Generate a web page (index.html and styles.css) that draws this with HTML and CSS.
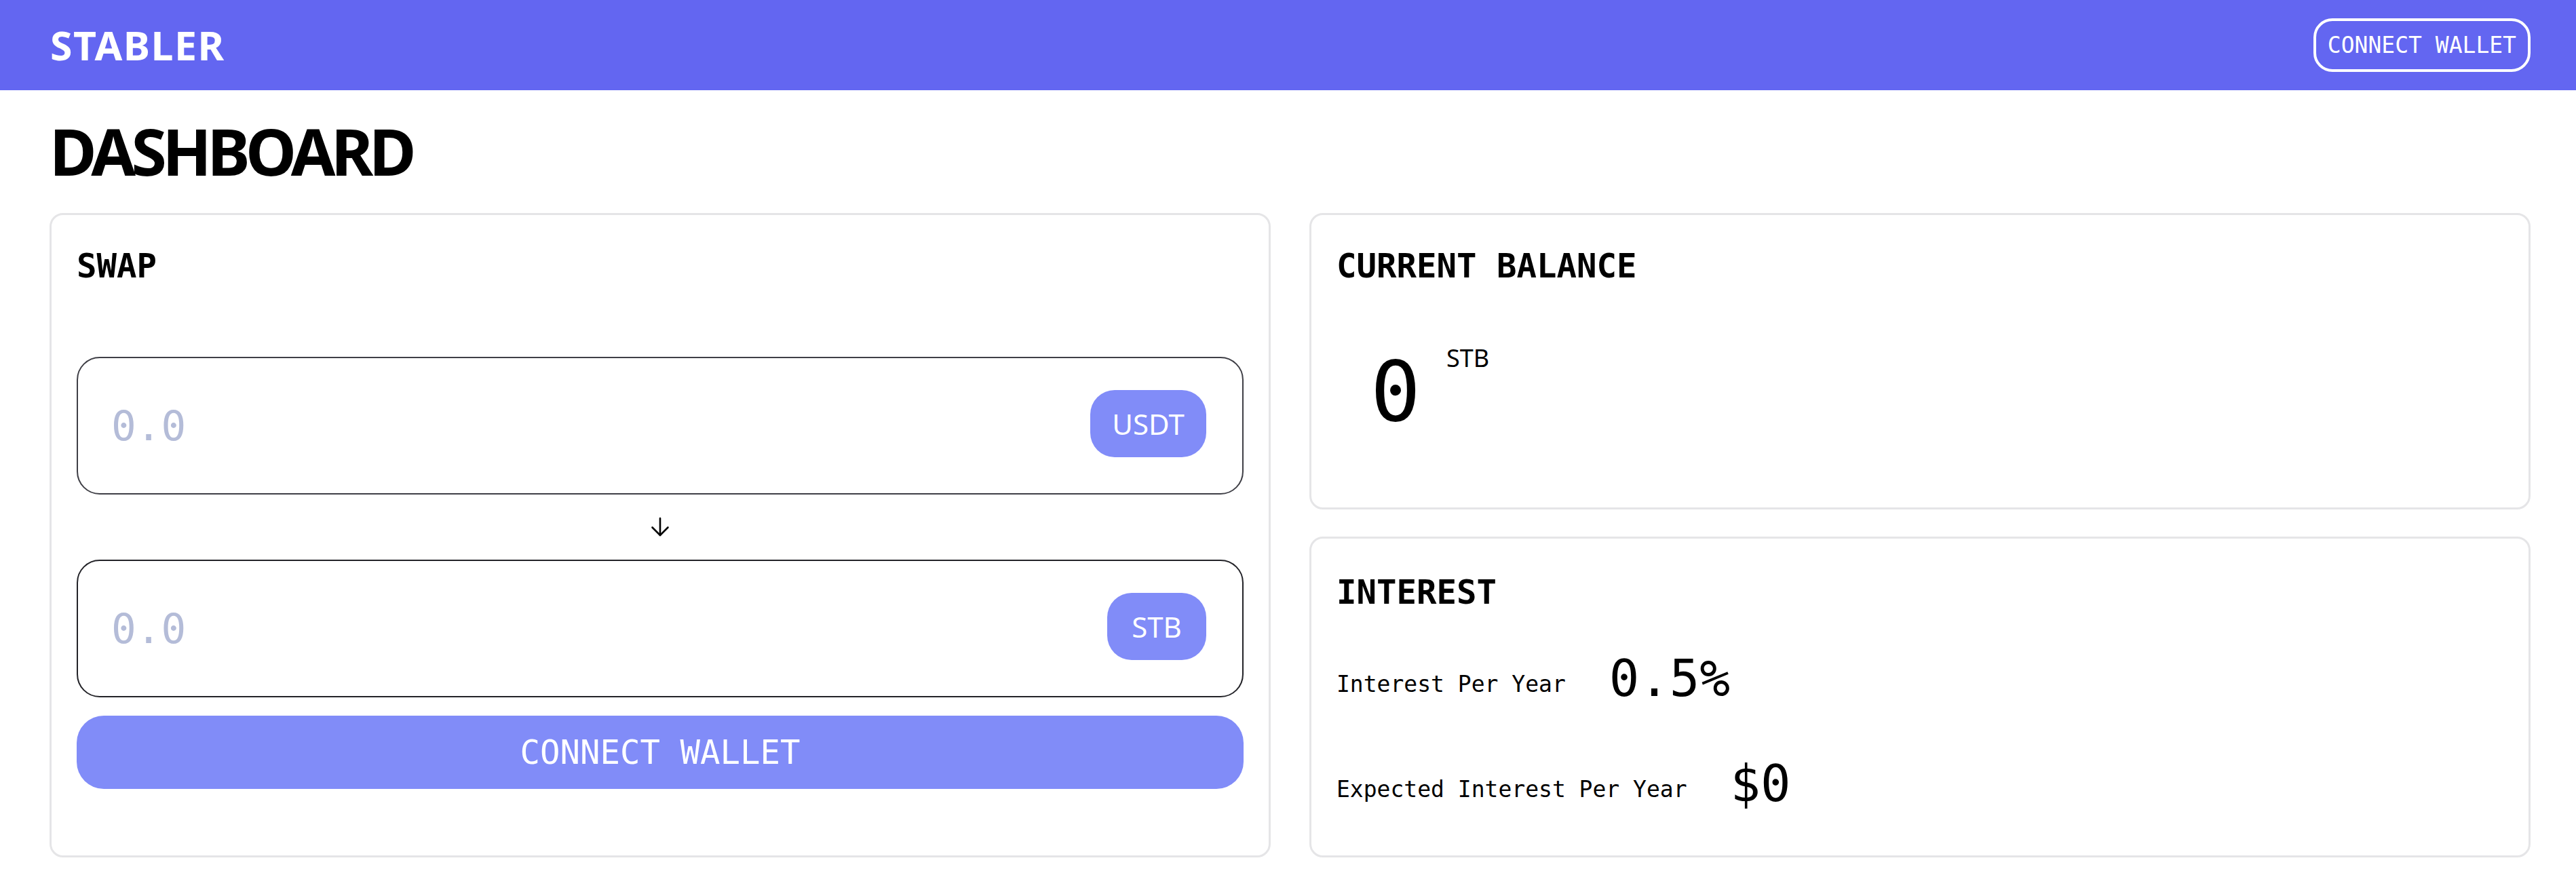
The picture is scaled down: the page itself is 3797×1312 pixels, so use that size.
FILE: index.html
```html
<!DOCTYPE html>
<html lang="en">
<head>
<meta charset="utf-8">
<title>Stabler – Dashboard</title>
<link rel="stylesheet" href="styles.css">
</head>
<body>
<header class="topbar">
  <div class="logo">STABLER</div>
  <button class="btn-outline" type="button">CONNECT WALLET</button>
</header>
<main class="page">
  <h1 class="page-title">DASHBOARD</h1>
  <div class="grid">
    <section class="card swap-card">
      <h2 class="card-title">SWAP</h2>
      <div class="field field-from">
        <input class="amount" type="text" placeholder="0.0">
        <span class="token token-usdt">USDT</span>
      </div>
      <div class="arrow-row">
        <svg class="arrow" width="28" height="30" viewBox="0 0 28 30" fill="none" stroke="#000" stroke-width="2.6" stroke-linecap="round" stroke-linejoin="round">
          <path d="M14 2 V27"/>
          <path d="M2.5 15.5 L14 27 L25.5 15.5"/>
        </svg>
      </div>
      <div class="field field-to">
        <input class="amount" type="text" placeholder="0.0">
        <span class="token token-stb">STB</span>
      </div>
      <button class="btn-primary" type="button">CONNECT WALLET</button>
    </section>
    <div class="side">
      <section class="card balance-card">
        <h2 class="card-title">CURRENT BALANCE</h2>
        <div class="balance">
          <span class="balance-value">0</span>
          <span class="balance-unit">STB</span>
        </div>
      </section>
      <section class="card interest-card">
        <h2 class="card-title">INTEREST</h2>
        <div class="stat">
          <span class="stat-label">Interest Per Year</span>
          <span class="stat-value">0.5%</span>
        </div>
        <div class="stat stat-next">
          <span class="stat-label">Expected Interest Per Year</span>
          <span class="stat-value">$0</span>
        </div>
      </section>
    </div>
  </div>
</main>
</body>
</html>
```
FILE: styles.css
```css
* {
  box-sizing: border-box;
}

html, body {
  margin: 0;
  padding: 0;
  background: #ffffff;
}

body {
  font-family: "Noto Sans", "Open Sans", sans-serif;
  color: #000;
}

.btn-outline,
.card-title,
.amount,
.btn-primary,
.balance-value,
.stat-label,
.stat-value {
  font-family: "DejaVu Sans Mono", "Liberation Mono", monospace;
  font-variant-numeric: slashed-zero;
}

.topbar {
  height: 133px;
  background: #6366f1;
  display: flex;
  align-items: center;
  justify-content: space-between;
  padding: 0 67px 0 74px;
}

.logo {
  font-family: "Noto Sans", sans-serif;
  font-weight: 700;
  font-size: 59px;
  line-height: 1;
  color: #ffffff;
  letter-spacing: 1.5px;
}

.btn-outline {
  height: 79px;
  padding: 0 17px;
  border: 4px solid #ffffff;
  border-radius: 28px;
  background: transparent;
  color: #ffffff;
  font-size: 33px;
  line-height: 1;
}

.page {
  padding: 0 67px 40px 73px;
}

.page-title {
  margin: 40px 0 43px;
  font-family: "Noto Sans", sans-serif;
  font-weight: 700;
  font-size: 95px;
  line-height: 98px;
  letter-spacing: -6.5px;
}

.grid {
  display: grid;
  grid-template-columns: 1fr 1fr;
  column-gap: 57px;
  align-items: stretch;
}

.side {
  display: flex;
  flex-direction: column;
  gap: 40px;
}

.card {
  border: 3px solid #e5e5e7;
  border-radius: 20px;
  padding: 47px 37px 0;
  background: #fff;
}

.card-title {
  margin: 0;
  font-weight: 700;
  font-size: 49px;
  line-height: 58px;
}

/* swap */
.swap-card {
  display: flex;
  flex-direction: column;
}

.field {
  height: 203px;
  border: 2px solid #3f3f46;
  border-radius: 34px;
  display: flex;
  align-items: center;
  padding: 0 53px 0 49px;
}

.field-from {
  margin-top: 104px;
}

.field-to {
  border-color: #232328;
}

.amount {
  flex: 1;
  min-width: 0;
  border: none;
  outline: none;
  background: transparent;
  padding: 0;
  font-size: 61px;
  color: #111;
}

.amount::placeholder {
  color: #b4bcd8;
  opacity: 1;
}

.token {
  height: 99px;
  display: flex;
  align-items: center;
  justify-content: center;
  background: #818cf8;
  color: #fff;
  border-radius: 36px;
  font-family: "Noto Sans", sans-serif;
  font-size: 42px;
  margin-top: -6px;
}

.token-usdt {
  width: 171px;
}

.token-stb {
  width: 146px;
}

.arrow-row {
  height: 96px;
  display: flex;
  align-items: center;
  justify-content: center;
}

.btn-primary {
  margin-top: 27px;
  height: 108px;
  border: none;
  border-radius: 40px;
  background: #818cf8;
  color: #fff;
  font-size: 49px;
  width: 100%;
}

/* balance */
.balance-card {
  padding-bottom: 110px;
}

.balance {
  margin-top: 95px;
  display: flex;
  align-items: flex-start;
  padding-left: 50px;
}

.balance-value {
  font-size: 123px;
  line-height: 121px;
}

.balance-unit {
  margin-left: 38px;
  margin-top: -7px;
  font-family: "Noto Sans", sans-serif;
  font-size: 36px;
  line-height: 36px;
}

/* interest */
.interest-card {
  padding-top: 51px;
  padding-bottom: 69px;
}

.stat {
  margin-top: 61px;
  display: flex;
  align-items: flex-end;
  gap: 64px;
}

.stat-next {
  margin-top: 82px;
}

.stat-label {
  font-size: 33px;
  line-height: 57px;
}

.stat-value {
  font-size: 74px;
  line-height: 73px;
}
```
